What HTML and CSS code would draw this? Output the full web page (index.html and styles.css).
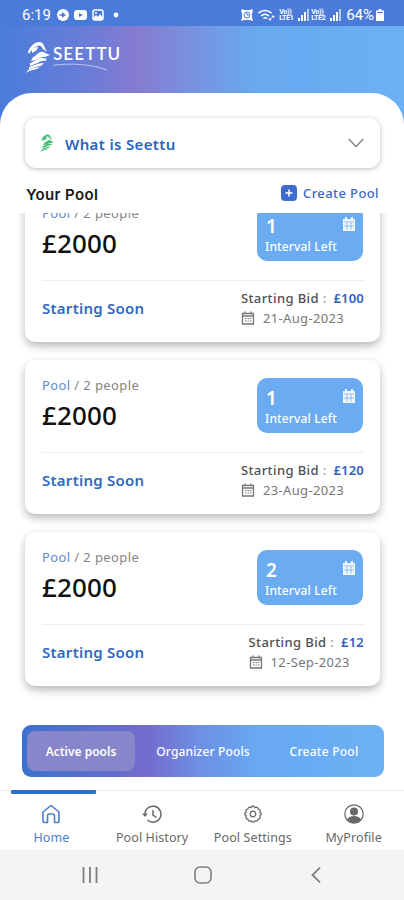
FILE: index.html
```html
<!DOCTYPE html>
<html lang="en">
<head>
    <meta charset="UTF-8">
    <meta name="viewport" content="width=device-width, initial-scale=1">
    <title>Seettu</title>
    <link rel="stylesheet" href="styles.css">
</head>
<body>
    <svg class="sprite" aria-hidden="true">
        <symbol id="bird" viewBox="0 0 24 32">
            <path d="M2 11C4 5 9 1 13 1c5 0 5 5 8 10l-4-3c-3-6-8-4-14 5z"/>
            <path d="M6 8l6-3-1 4-5 3z"/>
            <path d="M7 16c4-1 5-6 10-5l7 3-5 2c-4-1-6 3-14 4z"/>
            <path d="M4 22c5-1 8-6 13-5l4 1-2 2c-5-1-7 3-15 5z"/>
            <path d="M3 26c5-1 8-4 15-4l-3 3c-4 0-7 2-12 3z"/>
            <path d="M0 32c2-4 5-5 14-6-3 3-9 2-14 6z"/>
        </symbol>
        <symbol id="calendar-solid" viewBox="0 0 14 14">
            <path fill="#fff" fill-opacity=".9" d="M1 2h2V0h2v2h4V0h2v2h2v12H1z"/>
            <path fill="none" stroke="#6babf2" stroke-width=".7" d="M2 5h10M2 9h10M5 5.500v7M9 5.500v7"/>
        </symbol>
        <symbol id="calendar" viewBox="0 0 14 14">
            <path fill="none" stroke="currentColor" stroke-width="1.300" d="M1.500 2.500h11v10.500h-11zM1.500 5h11M4 .5v2.500M10 .5v2.500"/>
            <path fill="none" stroke="currentColor" stroke-dasharray="1.500 1" d="M4 7.500h6.500M4 10h6.500"/>
        </symbol>
        <symbol id="signal" viewBox="0 0 11 12">
            <path fill="#fff" d="M0 9h2v3H0zM3 6h2v6H3zM6 3h2v9H6z"/>
            <path fill="#fff" fill-opacity=".6" d="M9 0h2v12H9z"/>
        </symbol>
    </svg>

    <div id="status-bar">
        <span class="clock">6:19</span>
        <svg class="status-left" width="64" height="14" viewBox="0 0 64 14">
            <circle cx="6" cy="7" r="6" fill="#fff"/>
            <path fill="#4b7bd9" d="M5 4l4 3-4 3zM2.500 6.200h3v1.600h-3z"/>
            <rect x="17" y="2" width="13" height="10" rx="3" fill="#fff"/>
            <path fill="#4b7bd9" d="M22 5l4 2-4 2z"/>
            <rect x="36" y="2" width="10" height="10" rx="2" fill="none" stroke="#fff" stroke-width="1.500"/>
            <path fill="#fff" d="M36 10l3-3 2 2 2-3 3 4v2H36z"/>
            <circle cx="39" cy="5" r="1" fill="#fff"/>
            <circle cx="59" cy="7" r="2.400" fill="#fff"/>
        </svg>
        <div class="status-right">
            <svg width="12" height="12" viewBox="0 0 12 12">
                <path fill="#fff" d="M1 0l2 1h6l2-1 1 2-1 2v5l1 2-1 1-2-1H3l-2 1-1-1 1-2V4L0 2z"/>
                <circle cx="6" cy="6" r="3" fill="none" stroke="#4b7bd9"/>
                <path fill="none" stroke="#4b7bd9" d="M6 4v2h2"/>
            </svg>
            <svg class="wifi" width="17" height="13" viewBox="0 0 17 13">
                <path fill="none" stroke="#fff" stroke-width="1.600" d="M.5 4q6.500-5 13 0M3 7q4-3.500 8 0M5.500 9.500q1.500-1.500 3.500 0"/>
                <path fill="#fff" d="M10 9.500h4L12 12zM13 8.500L15 6l2 2.500z"/>
            </svg>
            <div class="lte"><span>Vo))</span><span>LTE1</span></div>
            <svg width="11" height="12"><use href="#signal"/></svg>
            <div class="lte"><span>Vo))</span><span>LTE2</span></div>
            <svg width="11" height="12"><use href="#signal"/></svg>
            <span class="percent">64%</span>
            <svg width="8" height="12" viewBox="0 0 8 12"><path fill="#fff" d="M2.500 0h3v1.500H8V12H0V1.500h2.500z"/><path stroke="#4b7bd9" d="M1 3.500h6"/></svg>
        </div>
    </div>

    <header id="header">
        <svg class="logo-bird" width="24" height="32"><use href="#bird"/></svg>
        <div class="logo-text">
            <span>SEETTU</span>
            <svg width="60" height="8" viewBox="0 0 60 8"><path fill="none" stroke="#fff" stroke-opacity=".55" d="M-1 2.500C17-.5 40 1.500 54 7"/></svg>
        </div>
    </header>

    <main id="content">
        <div class="accordion">
            <svg class="accordion-bird" width="14" height="18"><use href="#bird"/></svg>
            <span class="accordion-title">What is Seettu</span>
            <svg width="16" height="10" viewBox="0 0 16 10"><path fill="none" stroke="#8c8c8c" stroke-width="1.600" d="M.7 1L8 8.500 15.300 1"/></svg>
        </div>
        <div class="pool-heading">
            <h2>Your Pool</h2>
            <a class="create-pool">
                <svg width="16" height="16" viewBox="0 0 16 16"><rect width="16" height="16" rx="4" fill="#3d6dd0"/><path stroke="#fff" stroke-width="1.500" d="M8 4.500v7M4.500 8h7"/></svg>
                <span>Create Pool</span>
            </a>
        </div>

        <div id="pool-list">
            <div class="card">
                <div class="card-top">
                    <div>
                        <p class="people"><span>Pool</span> / 2 people</p>
                        <p class="amount">£2000</p>
                    </div>
                    <div class="interval">
                        <div class="interval-row"><b>1</b><svg width="14" height="14"><use href="#calendar-solid"/></svg></div>
                        <p>Interval Left</p>
                    </div>
                </div>
                <div class="card-bottom">
                    <span class="soon">Starting Soon</span>
                    <div class="bid">
                        <p class="bid-amount">Starting Bid <i>:</i> <b>£100</b></p>
                        <p class="date"><svg width="14" height="14"><use href="#calendar"/></svg><span>21-Aug-2023</span></p>
                    </div>
                </div>
            </div>

            <div class="card">
                <div class="card-top">
                    <div>
                        <p class="people"><span>Pool</span> / 2 people</p>
                        <p class="amount">£2000</p>
                    </div>
                    <div class="interval">
                        <div class="interval-row"><b>1</b><svg width="14" height="14"><use href="#calendar-solid"/></svg></div>
                        <p>Interval Left</p>
                    </div>
                </div>
                <div class="card-bottom">
                    <span class="soon">Starting Soon</span>
                    <div class="bid">
                        <p class="bid-amount">Starting Bid <i>:</i> <b>£120</b></p>
                        <p class="date"><svg width="14" height="14"><use href="#calendar"/></svg><span>23-Aug-2023</span></p>
                    </div>
                </div>
            </div>

            <div class="card">
                <div class="card-top">
                    <div>
                        <p class="people"><span>Pool</span> / 2 people</p>
                        <p class="amount">£2000</p>
                    </div>
                    <div class="interval">
                        <div class="interval-row"><b>2</b><svg width="14" height="14"><use href="#calendar-solid"/></svg></div>
                        <p>Interval Left</p>
                    </div>
                </div>
                <div class="card-bottom">
                    <span class="soon">Starting Soon</span>
                    <div class="bid">
                        <p class="bid-amount">Starting Bid <i>:</i> <b>£12</b></p>
                        <p class="date"><svg width="14" height="14"><use href="#calendar"/></svg><span>12-Sep-2023</span></p>
                    </div>
                </div>
            </div>
        </div>

        <div id="tabs">
            <a class="tab tab-active">Active pools</a>
            <a class="tab tab-organizer">Organizer Pools</a>
            <a class="tab tab-create">Create Pool</a>
        </div>
    </main>

    <nav id="bottom-nav">
        <a class="nav-item nav-active">
            <svg width="20" height="20" viewBox="0 0 20 20"><path fill="none" stroke="currentColor" stroke-width="1.600" stroke-linejoin="round" d="M2 8l8-6.500L18 8v9q0 1.500-1.500 1.500h-3V12q0-2-2-2h-3q-2 0-2 2v6.500h-3Q2 18.500 2 17z"/></svg>
            <span>Home</span>
        </a>
        <a class="nav-item">
            <svg width="20" height="20" viewBox="0 0 20 20"><path fill="none" stroke="currentColor" stroke-width="1.500" d="M3 11a8 8 0 1 1 2.500 5M11 6v5l3.500 2.500"/><path fill="currentColor" d="M0 9.500h6L3 13z"/></svg>
            <span>Pool History</span>
        </a>
        <a class="nav-item">
            <svg width="20" height="20" viewBox="0 0 20 20"><path fill="none" stroke="currentColor" stroke-width="1.300" stroke-linejoin="round" d="M8.200 3.500Q10 .5 11.800 3.500 15.200 2.600 15.200 5.200 18.200 5.700 16.800 8.400 19.800 10 16.800 11.800 18 14.600 15.200 15 14.800 17.800 11.800 16.800 10 19.600 8.200 16.800 5.200 17.800 4.800 15 2 14.600 3.200 11.800.2 10 3.200 8.400 1.800 5.700 4.800 5.200 4.800 2.600 8.200 3.500z"/><circle cx="10" cy="10" r="2.800" fill="none" stroke="currentColor" stroke-width="1.300"/></svg>
            <span>Pool Settings</span>
        </a>
        <a class="nav-item">
            <svg width="20" height="20" viewBox="0 0 20 20"><circle cx="10" cy="10" r="9.200" fill="none" stroke="currentColor" stroke-width="1.200"/><circle cx="10" cy="7.500" r="4" fill="currentColor"/><path fill="currentColor" d="M3 15.500q2-3.500 7-3.500t7 3.500q-2.500 3.500-7 3.500t-7-3.500z"/></svg>
            <span>MyProfile</span>
        </a>
    </nav>

    <div id="system-bar">
        <svg width="16" height="16" viewBox="0 0 16 16"><path stroke="#7e7e7e" stroke-width="1.800" d="M1.500 0v16M8 0v16M14.500 0v16"/></svg>
        <svg width="18" height="18" viewBox="0 0 18 18"><rect x="1" y="1" width="16" height="16" rx="5" fill="none" stroke="#7e7e7e" stroke-width="1.600"/></svg>
        <svg width="10" height="16" viewBox="0 0 10 16"><path fill="none" stroke="#7e7e7e" stroke-width="1.800" d="M9 .7L1.500 8 9 15.300"/></svg>
    </div>
</body>
</html>
```
FILE: styles.css
```css
* {
    box-sizing: border-box;
}
body {
    margin: 0;
    width: 404px;
    height: 900px;
    overflow: hidden;
    display: flex;
    flex-direction: column;
    font-family: "Noto Sans", "Open Sans", sans-serif;
    background: linear-gradient(90deg, #4a7ddb 0, #6b7dd7 90px, #857bd0 135px, #7891df 190px, #68a9f0 255px, #6cb0f5 100%);
}
h2, p {
    margin: 0;
}
svg {
    display: block;
    flex: none;
}
.sprite {
    display: none;
}

#status-bar {
    height: 26px;
    flex: none;
    padding: 4px 20px 0 22px;
    display: flex;
    align-items: center;
    color: #fff;
    background: #4b7bd9;
}
.clock {
    width: 35px;
    font: 15px Roboto, sans-serif;
}
.status-right {
    margin-left: auto;
    display: flex;
    align-items: center;
    gap: 2px;
}
.wifi {
    margin: 0 2px 0 3px;
}
.lte {
    width: 17px;
    display: flex;
    flex-direction: column;
    font: bold 7px/6px Roboto, sans-serif;
    letter-spacing: -.2px;
}
.percent {
    margin-left: 3px;
    font: 15px Roboto, sans-serif;
}

#header {
    height: 67px;
    flex: none;
    padding: 15px 26px 0;
    display: flex;
    color: #fff;
}
.logo-bird {
    fill: #fff;
}
.logo-text {
    padding: 3px 0 0 3px;
    font: 600 17px/20px Lato, sans-serif;
    letter-spacing: 1.100px;
}
.logo-text svg {
    margin-top: -1px;
}

#content {
    height: 697px;
    flex: none;
    display: flex;
    flex-direction: column;
    background: #fff;
    border-radius: 32px 32px 0 0;
}
.accordion {
    height: 50px;
    margin: 25px 24px 0 25px;
    padding: 0 16px 0 15px;
    display: flex;
    align-items: center;
    border-radius: 11px;
    box-shadow: 0 1px 5px rgba(0, 0, 0, .27);
}
.accordion-bird {
    fill: #42bd76;
}
.accordion-title {
    margin: 1px auto 0 11px;
    font-size: 15px;
    font-weight: 600;
    letter-spacing: .35px;
    color: #2965bf;
}
.pool-heading {
    height: 45px;
    padding: 4px 25px 0 26px;
    display: flex;
    align-items: flex-start;
    justify-content: space-between;
}
.pool-heading h2 {
    font: 600 15px/45px Inter, sans-serif;
    letter-spacing: .35px;
    color: #171717;
}
.create-pool {
    display: flex;
    align-items: center;
    gap: 6px;
    height: 42px;
    font-size: 13px;
    font-weight: 500;
    letter-spacing: .4px;
    color: #3e66c4;
}

#pool-list {
    height: 495px;
    overflow: hidden;
    padding: 0 24px 0 25px;
}
.card {
    height: 154px;
    margin-bottom: 18px;
    padding: 18px 16px 0 17px;
    border-radius: 10px;
    background: #fff;
    box-shadow: 0 4px 9px rgba(0, 0, 0, .28);
}
.card:first-child {
    margin-top: -25px;
}
.card-top {
    height: 75px;
    display: flex;
    justify-content: space-between;
    border-bottom: 1px #efefef solid;
}
.people {
    font-size: 13px;
    line-height: 15px;
    letter-spacing: .4px;
    color: #858585;
}
.people span {
    color: #658acb;
}
.amount {
    margin-top: 4px;
    font-size: 26px;
    line-height: 36px;
    font-weight: 500;
    letter-spacing: .1px;
    color: #111;
}
.interval {
    width: 106px;
    height: 55px;
    margin-right: 1px;
    padding: 9px 7px 0 8px;
    border-radius: 10px;
    background: #6babf2;
    color: #fff;
}
.interval-row {
    height: 22px;
    display: flex;
    justify-content: space-between;
}
.interval b {
    padding-left: 1px;
    font-size: 19px;
    line-height: 22px;
    font-weight: 600;
}
.interval-row svg {
    margin-top: 2px;
}
.interval p {
    font-size: 12px;
    line-height: 19px;
    font-weight: 500;
    letter-spacing: .15px;
}
.card-bottom {
    padding-top: 7px;
    display: flex;
    justify-content: space-between;
}
.soon {
    font-size: 15px;
    line-height: 41px;
    font-weight: 600;
    letter-spacing: .25px;
    color: #3169bf;
}
.bid-amount {
    font-size: 13px;
    line-height: 20px;
    font-weight: 500;
    letter-spacing: .4px;
    color: #505050;
}
.bid-amount i {
    font-style: normal;
    color: #999;
}
.bid-amount b {
    margin-left: 3px;
    font-weight: 600;
    letter-spacing: .2px;
    color: #315fc0;
}
.date {
    display: flex;
    align-items: center;
    gap: 8px;
    font-size: 13px;
    line-height: 20px;
    letter-spacing: .35px;
    color: #777;
}

#tabs {
    width: 362px;
    height: 52px;
    margin: 17px 0 0 22px;
    padding: 6px 5px;
    display: flex;
    border-radius: 9px;
    background: linear-gradient(90deg, #3a72cf 0, #746bcd 125px, #6e8ee2 175px, #68a9f1 235px, #6cb0f5 100%);
}
.tab {
    text-align: center;
    font-size: 12px;
    line-height: 41px;
    font-weight: 500;
    color: #fff;
}
.tab-active {
    width: 108px;
    border-radius: 8px;
    background: #8786ca;
    font-weight: 600;
}
.tab-organizer {
    width: 136px;
    letter-spacing: .15px;
}
.tab-create {
    width: 106px;
    letter-spacing: .25px;
}

#bottom-nav {
    height: 60px;
    flex: none;
    display: flex;
    padding: 0 0 0 1px;
    border-top: 1px #e8ecec solid;
    background: #fff;
}
.nav-item {
    width: 101px;
    padding-top: 13px;
    display: flex;
    flex-direction: column;
    align-items: center;
    gap: 4px;
    font-size: 12.500px;
    line-height: 20px;
    letter-spacing: .1px;
    color: #686868;
}
.nav-active {
    color: #4b7ccd;
}
/* bar over the selected item */
.nav-active::before {
    content: "";
    width: 85px;
    height: 4px;
    margin: -14px 0 6px 4px;
    border-radius: 1px;
    background: #2e70c8;
}

#system-bar {
    height: 50px;
    flex: none;
    padding: 0 83px 0 82px;
    display: flex;
    align-items: center;
    justify-content: space-between;
    background: #f4f4f4;
}
#system-bar svg:nth-child(2) {
    margin-right: 4px;
}
```
